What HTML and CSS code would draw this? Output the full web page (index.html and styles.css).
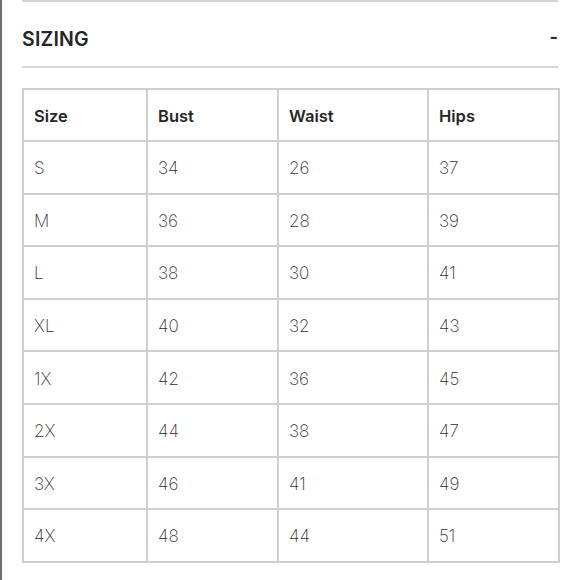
FILE: index.html
```html
<!DOCTYPE html>
<html>
<head>
<meta charset="utf-8">
<link rel="stylesheet" href="styles.css">
</head>
<body>
<div class="page">
  <div class="panel">
    <div class="section-head">
      <h2 class="title">SIZING</h2>
      <span class="toggle">-</span>
    </div>
    <table class="size-table">
      <colgroup>
        <col class="c1"><col class="c2"><col class="c3"><col class="c4">
      </colgroup>
      <thead>
        <tr><th>Size</th><th>Bust</th><th>Waist</th><th>Hips</th></tr>
      </thead>
      <tbody>
        <tr><td>S</td><td>34</td><td>26</td><td>37</td></tr>
        <tr><td>M</td><td>36</td><td>28</td><td>39</td></tr>
        <tr><td>L</td><td>38</td><td>30</td><td>41</td></tr>
        <tr><td>XL</td><td>40</td><td>32</td><td>43</td></tr>
        <tr><td>1X</td><td>42</td><td>36</td><td>45</td></tr>
        <tr><td>2X</td><td>44</td><td>38</td><td>47</td></tr>
        <tr><td>3X</td><td>46</td><td>41</td><td>49</td></tr>
        <tr><td>4X</td><td>48</td><td>44</td><td>51</td></tr>
      </tbody>
    </table>
  </div>
</div>
</body>
</html>
```
FILE: styles.css
```css
html, body {
  margin: 0;
  padding: 0;
  background: #fff;
}
.page {
  width: 580px;
  height: 580px;
  border-left: 2px solid #6e6e6e;
  box-sizing: border-box;
  font-family: Inter, "Liberation Sans", sans-serif;
  color: #2b2b2b;
}
.panel {
  margin-left: 20px;
  width: 536px;
}
.section-head {
  height: 64px;
  border-top: 2px solid #d6d6d6;
  border-bottom: 2px solid #d6d6d6;
  display: flex;
  align-items: center;
  justify-content: space-between;
  box-sizing: content-box;
}
.title {
  margin: 0;
  font-size: 19.5px;
  font-weight: 600;
  letter-spacing: 0.2px;
  color: #262626;
  padding-top: 9px;
}
.toggle {
  font-size: 18px;
  font-weight: 700;
  padding-right: 0;
  padding-top: 5px;
}
.size-table {
  margin-top: 20px;
  border-collapse: collapse;
  width: 536px;
  table-layout: fixed;
}
.c1 { width: 124px; }
.c2 { width: 131px; }
.c3 { width: 150px; }
.c4 { width: 131px; }
.size-table th,
.size-table td {
  border: 2px solid #cfcfcf;
  padding: 0 0 0 10px;
  text-align: left;
  font-size: 17px;
  box-sizing: border-box;
}
.size-table th {
  height: 52px;
  font-size: 16.5px;
  font-weight: 600;
  color: #262626;
  padding-top: 2px;
}
.size-table td {
  height: 52.6px;
  font-weight: 200;
  color: #2e2e2e;
  padding-top: 2px;
}
```
